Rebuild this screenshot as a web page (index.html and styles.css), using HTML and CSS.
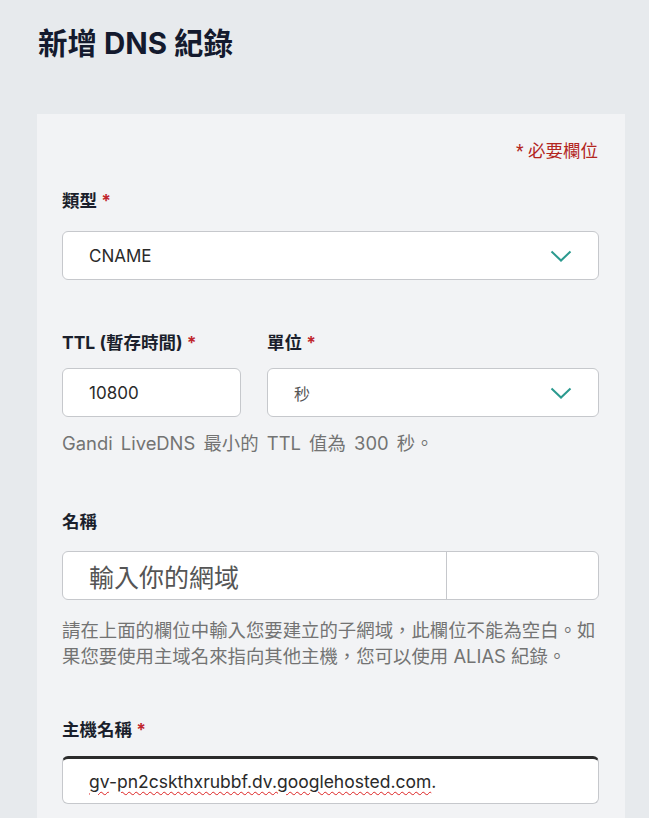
FILE: index.html
```html
<!DOCTYPE html>
<html lang="zh-Hant">
<head>
<meta charset="utf-8">
<title>新增 DNS 紀錄</title>
<link rel="stylesheet" href="styles.css">
</head>
<body>
<h1 class="title">新增 DNS 紀錄</h1>
<div class="card">
  <div class="required-note">* 必要欄位</div>

  <div class="label label-type">類型 <span class="star">*</span></div>
  <div class="field select">
    <span class="value">CNAME</span>
    <svg class="chev" width="22" height="12" viewBox="0 0 22 12"><path d="M1.5 1.5 L11 10.5 L20.5 1.5" fill="none" stroke="#2b9a8f" stroke-width="2"/></svg>
  </div>

  <div class="row-two">
    <div class="col-ttl">
      <div class="label">TTL (暫存時間) <span class="star">*</span></div>
      <div class="field"><span class="value">10800</span></div>
    </div>
    <div class="col-unit">
      <div class="label">單位 <span class="star">*</span></div>
      <div class="field select">
        <span class="value light">秒</span>
        <svg class="chev" width="22" height="12" viewBox="0 0 22 12"><path d="M1.5 1.5 L11 10.5 L20.5 1.5" fill="none" stroke="#2b9a8f" stroke-width="2"/></svg>
      </div>
    </div>
  </div>
  <div class="help help-ttl">Gandi LiveDNS 最小的 TTL 值為 300 秒。</div>

  <div class="label label-name">名稱</div>
  <div class="field split">
    <span class="placeholder">輸入你的網域</span>
    <span class="suffix"></span>
  </div>
  <div class="help help-name">請在上面的欄位中輸入您要建立的子網域，此欄位不能為空白。如果您要使用主域名來指向其他主機，您可以使用 ALIAS 紀錄。</div>

  <div class="label label-host">主機名稱 <span class="star">*</span></div>
  <div class="field focused"><span class="value host"><span class="sp">gv</span>-<span class="sp">pn2cskthxrubbf.dv.googlehosted.com</span>.</span></div>
</div>
</body>
</html>
```

FILE: styles.css
```css
html, body {
  margin: 0;
  padding: 0;
}
body {
  background: #e7eaed;
  font-family: "Inter", "Noto Sans CJK TC", sans-serif;
  color: #1c1f2b;
  height: 818px;
  overflow: hidden;
}
.title {
  margin: 0 0 56px 38px;
  padding-top: 28px;
  font-size: 29.5px;
  line-height: 30px;
  font-weight: 700;
  color: #141a2e;
}
.card {
  margin-left: 37px;
  width: 588px;
  box-sizing: border-box;
  background: #f2f3f5;
  padding: 25px 26px 40px 25px;
  min-height: 720px;
}
.required-note {
  text-align: right;
  color: #b3261e;
  font-family: "Roboto", "Noto Sans CJK TC", sans-serif;
  font-size: 17.5px;
  line-height: 24px;
  padding-right: 1px;
}
.label {
  font-size: 17.5px;
  line-height: 22px;
  font-weight: 700;
  color: #1b1f2c;
}
.star {
  color: #c0262d;
}
.label-type {
  margin-top: 27px;
  margin-bottom: 19px;
}
.field {
  height: 49px;
  box-sizing: border-box;
  background: #fff;
  border: 1px solid #c6c8cc;
  border-radius: 6px;
  display: flex;
  align-items: center;
  padding-left: 26px;
  font-size: 17px;
  color: #2a2a2a;
}
.select {
  justify-content: space-between;
  padding-right: 26px;
}
.chev {
  display: block;
}
.value.light {
  color: #555;
  font-size: 16px;
}
.row-two {
  display: flex;
  gap: 26px;
  margin-top: 52px;
}
.row-two .label {
  margin-bottom: 14px;
}
.col-ttl {
  width: 179px;
}
.col-unit {
  flex: 1;
}
.help {
  color: #737373;
  font-family: "Inter", "Noto Sans CJK TC", sans-serif;
  font-size: 18.4px;
  line-height: 26px;
}
.help-ttl {
  margin-top: 13px;
  word-spacing: 3px;
}
.label-name {
  margin-top: 55px;
  margin-bottom: 18px;
}
.split {
  padding-left: 0;
}
.placeholder {
  width: 384px;
  height: 100%;
  box-sizing: border-box;
  padding-left: 26px;
  display: flex;
  align-items: center;
  border-right: 1px solid #c6c8cc;
  font-size: 25px;
  color: #555;
}
.suffix {
  flex: 1;
}
.help-name {
  margin-top: 17px;
}
.label-host {
  margin-top: 50px;
  margin-bottom: 15px;
}
.focused {
  border-top: 3px solid #2b2b2b;
  height: 48px;
}
.host {
  font-size: 17.5px;
}
.sp {
  text-decoration: underline wavy #d22;
  text-underline-offset: 3px;
  text-decoration-thickness: 1px;
}
```
